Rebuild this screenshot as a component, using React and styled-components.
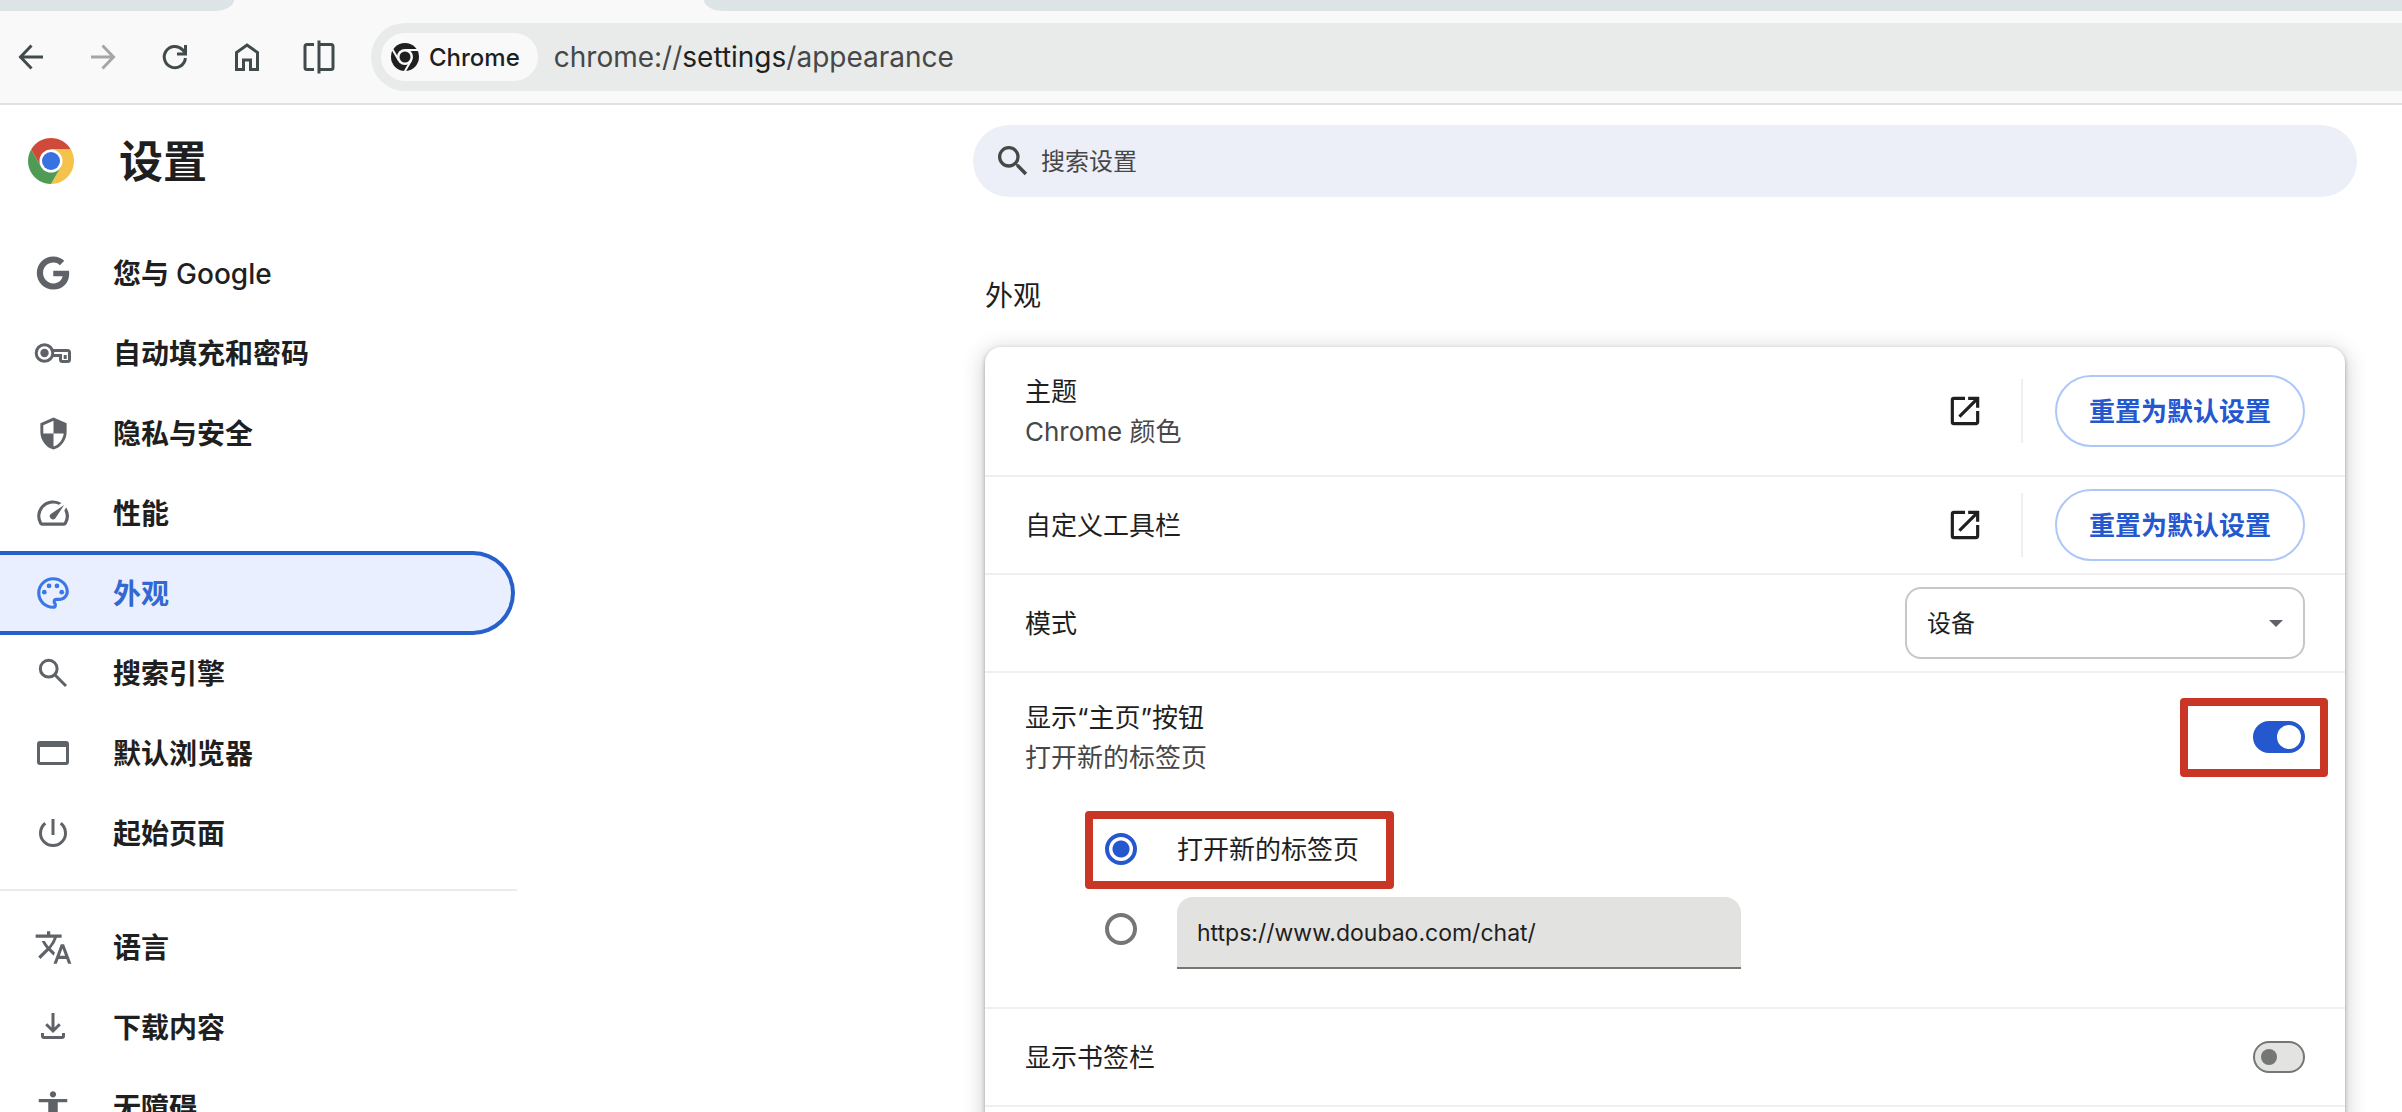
import React, { useState } from "react";
import styled, { createGlobalStyle, css } from "styled-components";
import {
  MdAccessibility,
  MdOpenInNew,
  MdOutlinePalette,
  MdSearch,
  MdSecurity,
  MdSpeed,
  MdTranslate,
} from "react-icons/md";
import { FaGoogle } from "react-icons/fa";

const color = {
  text: "#1f1f1f",
  subtle: "#474747",
  icon: "#5f6368",
  toolbarIcon: "#414b4b",
  blue: "#2557cf",
  line: "#efefef",
  mark: "#ca3625",
};

const GlobalStyle = createGlobalStyle`
  *, *::before, *::after { box-sizing: border-box; }
  body { margin: 0; background: #fff; overflow: hidden; }
  body, button, input, select {
    font-family: Inter, "Noto Sans CJK SC", sans-serif;
    color: ${color.text};
  }
`;

const Page = styled.div`
  display: flex;
  flex-direction: column;
  height: 100vh;
  overflow: hidden;
`;

/* Browser frame */

const TabStrip = styled.div`
  display: flex;
  justify-content: space-between;
  gap: 470px;
  height: 11px;
  flex: none;
  background: #f9f9f9;
`;

const TabEdge = styled.div`
  background: #dce4e6;
  ${(p) =>
    p.$side === "left"
      ? css`
          width: 234px;
          border-bottom-right-radius: 20px 11px;
        `
      : css`
          flex: 1;
          border-bottom-left-radius: 20px 11px;
        `}
`;

const Toolbar = styled.div`
  display: flex;
  align-items: center;
  flex: none;
  height: 94px;
  padding: 0 0 0 3px;
  background: #f9f9f9;
  border-bottom: 2px solid #e1e1e1;
`;

const ToolbarButtons = styled.div`
  display: flex;
  gap: 16px;
  margin-right: 24px;
`;

const ToolbarButton = styled.button`
  display: grid;
  place-items: center;
  width: 56px;
  height: 56px;
  padding: 0;
  border: 0;
  border-radius: 50%;
  background: none;
  color: ${color.toolbarIcon};
  &:disabled {
    color: #a5a7a7;
  }
`;

const AddressBar = styled.div`
  display: flex;
  align-items: center;
  flex: 1;
  gap: 16px;
  height: 68px;
  padding-left: 10px;
  border-radius: 34px 0 0 34px;
  background: #e8ebea;
`;

const SiteChip = styled.button`
  display: flex;
  align-items: center;
  gap: 10px;
  height: 48px;
  padding: 0 18px 0 10px;
  border: 0;
  border-radius: 24px;
  background: #f9f9f9;
  font-size: 24px;
  font-weight: 500;
`;

const Address = styled.div`
  font-size: 28px;
  line-height: 40px;
  color: ${color.subtle};
  b {
    font-weight: 400;
    color: ${color.text};
  }
`;

/* Settings header */

const Header = styled.header`
  display: flex;
  align-items: center;
  justify-content: space-between;
  flex: none;
  height: 112px;
  padding: 0 45px 0 28px;
`;

const Brand = styled.div`
  display: flex;
  align-items: center;
  gap: 45px;
`;

const Title = styled.h1`
  margin: 0;
  padding-top: 2px;
  font-size: 44px;
  line-height: 56px;
  font-weight: 600;
`;

const SearchBox = styled.label`
  display: flex;
  align-items: center;
  flex: 0 1 1384px;
  gap: 8px;
  height: 72px;
  padding: 0 24px 0 20px;
  border-radius: 36px;
  background: #eceff7;
  color: ${color.subtle};
  svg {
    flex: none;
  }
`;

const SearchInput = styled.input`
  flex: 1;
  min-width: 0;
  padding: 2px 0 0;
  border: 0;
  outline: 0;
  background: none;
  font-size: 24px;
  line-height: 40px;
  &::placeholder {
    color: ${color.subtle};
    opacity: 1;
  }
`;

/* Side menu */

const Body = styled.div`
  display: flex;
  justify-content: space-between;
  flex: 1;
  min-height: 0;
`;

const Sidebar = styled.nav`
  display: flex;
  flex-direction: column;
  gap: 4px;
  width: 517px;
  flex: none;
  padding-top: 18px;
  overflow: hidden;
`;

const MenuLink = styled.a`
  display: flex;
  align-items: center;
  flex: none;
  gap: 40px;
  height: 76px;
  margin-right: 6px;
  padding-left: 33px;
  border-radius: 0 38px 38px 0;
  text-decoration: none;
  color: ${color.text};
  ${(p) =>
    p.$active &&
    css`
      background: #e9effe;
      box-shadow: 0 0 0 4px #2860cb;
      color: #3367d1;
    `}
`;

const MenuIcon = styled.span`
  display: grid;
  place-items: center;
  width: 40px;
  height: 40px;
  color: ${(p) => (p.$active ? "#3b78e7" : color.icon)};
`;

const MenuLabel = styled.span`
  padding-top: 2px;
  font-size: 28px;
  line-height: 40px;
  font-weight: 600;
`;

const Latin = styled.span`
  font-weight: 500;
`;

const MenuDivider = styled.hr`
  flex: none;
  width: 100%;
  height: 2px;
  margin: 14px 0;
  border: 0;
  background: #ebebeb;
`;

/* Content */

const Main = styled.main`
  flex: 0 1 1384px;
  margin-right: 45px;
  padding: 59px 12px 0;
`;

const SectionTitle = styled.h2`
  margin: 0 0 31px;
  font-size: 28px;
  line-height: 40px;
  font-weight: 400;
`;

const Card = styled.section`
  min-height: 860px;
  border-radius: 16px;
  background: #fff;
  box-shadow:
    0 2px 4px rgba(60, 64, 67, 0.4),
    0 4px 20px 2px rgba(60, 64, 67, 0.24);
`;

const Row = styled.div`
  display: flex;
  align-items: center;
  justify-content: space-between;
  height: ${(p) => (p.$tall ? 128 : 96)}px;
  padding: 0 40px;
`;

const Group = styled.div`
  border-bottom: 2px solid ${color.line};
`;

const RowText = styled.label`
  display: flex;
  flex-direction: column;
  padding-top: 2px;
  font-size: 26px;
  line-height: 40px;
`;

const Secondary = styled.span`
  color: ${color.subtle};
`;

const Actions = styled.div`
  display: flex;
  align-items: center;
`;

const OpenLink = styled.a`
  display: grid;
  place-items: center;
  width: 72px;
  height: 72px;
  margin-right: 20px;
  color: ${color.text};
`;

const Separator = styled.span`
  width: 2px;
  height: 64px;
  margin-right: 32px;
  background: ${color.line};
`;

const ResetButton = styled.button`
  height: 72px;
  padding: 2px 32px 0;
  border: 2px solid #adc7f8;
  border-radius: 36px;
  background: #fff;
  color: ${color.blue};
  font-size: 26px;
  line-height: 40px;
  font-weight: 600;
`;

const SelectBox = styled.div`
  display: grid;
  align-items: center;
  width: 400px;
  color: ${color.icon};
  > * {
    grid-area: 1 / 1;
  }
  svg {
    justify-self: end;
    margin-right: 22px;
    pointer-events: none;
  }
`;

const Select = styled.select`
  width: 100%;
  height: 72px;
  padding: 0 20px;
  appearance: none;
  border: 2px solid #c7c7c7;
  border-radius: 16px;
  background: #fff;
  font-size: 24px;
`;

const Switch = styled.input`
  appearance: none;
  display: flex;
  align-items: center;
  width: 52px;
  height: 32px;
  margin: 0;
  padding: 0 6px;
  border: 2px solid #747775;
  border-radius: 16px;
  background: #e3e3e1;
  &::before {
    content: "";
    width: 16px;
    height: 16px;
    border-radius: 50%;
    background: #747775;
  }
  &:checked {
    justify-content: flex-end;
    padding: 0 2px;
    border-color: ${color.blue};
    background: ${color.blue};
  }
  &:checked::before {
    width: 24px;
    height: 24px;
    background: #fff;
  }
`;

const Marked = styled.div`
  position: relative;
  &::after {
    content: "";
    position: absolute;
    inset: ${(p) => p.$inset};
    border: 8px solid ${color.mark};
    border-radius: 4px;
    pointer-events: none;
  }
`;

const Choices = styled.div`
  display: flex;
  flex-direction: column;
  align-items: flex-start;
  padding: 8px 40px 38px 120px;
`;

const Choice = styled.div`
  display: flex;
  align-items: center;
  gap: 40px;
  height: 80px;
`;

const ChoiceLabel = styled.label`
  padding-top: 2px;
  font-size: 26px;
  line-height: 40px;
`;

const Radio = styled.input`
  appearance: none;
  width: 32px;
  height: 32px;
  margin: 0;
  border: 4px solid #747775;
  border-radius: 50%;
  background: #fff;
  &:checked {
    border-color: ${color.blue};
    background: radial-gradient(circle, ${color.blue} 0 8px, #fff 9px);
  }
`;

const UrlInput = styled.input`
  align-self: flex-end;
  width: 564px;
  height: 72px;
  padding: 2px 20px 0;
  border: 0;
  border-bottom: 2px solid #747775;
  border-radius: 16px 16px 0 0;
  outline: 0;
  background: #e2e2e0;
  font-size: 23px;
`;

/* Drawings */

const Stroke = ({ size = 40, width = 3, children }) => (
  <svg
    width={size}
    height={size}
    viewBox={`0 0 ${size} ${size}`}
    fill="none"
    stroke="currentColor"
    strokeWidth={width}
    aria-hidden="true"
  >
    {children}
  </svg>
);

const BackIcon = () => (
  <Stroke>
    <path d="M32 20H10M20.5 8.5 9.5 20l11 11.5" />
  </Stroke>
);
const ForwardIcon = () => (
  <Stroke>
    <path d="M8 20h22M19.5 8.5l11 11.5-11 11.5" />
  </Stroke>
);
const ReloadIcon = () => (
  <Stroke>
    <path d="M30.4 21A10.6 10.6 0 1 1 27.4 12.6L30 15.6" />
    <path d="M30.5 8v9H22" />
  </Stroke>
);
const HomeIcon = () => (
  <Stroke>
    <path d="M9.5 32.5v-17L20 8l10.5 7.5v17h-7V23h-7v9.5z" />
  </Stroke>
);
const SplitIcon = () => (
  <Stroke>
    <path d="M15 7.5H8a2 2 0 0 0-2 2v21a2 2 0 0 0 2 2h7M20 7.5h12a2 2 0 0 1 2 2v21a2 2 0 0 1-2 2H20" />
    <path d="M20 3.5v33" />
  </Stroke>
);

const ChromeMono = () => (
  <svg width="28" height="28" viewBox="0 0 28 28" aria-hidden="true">
    <circle cx="14" cy="14" r="14" fill="#1f1f1f" />
    <circle cx="14" cy="14" r="8" fill="#f9f9f9" />
    <g stroke="#f9f9f9" strokeWidth="2">
      <path d="M14 7h14" />
      <path d="M14 7h14" transform="rotate(120 14 14)" />
      <path d="M14 7h14" transform="rotate(240 14 14)" />
    </g>
    <circle cx="14" cy="14" r="5.5" fill="#1f1f1f" />
  </svg>
);

const ChromeLogo = () => (
  <svg width="46" height="46" viewBox="0 0 46 46" aria-hidden="true">
    <path fill="#d04a3a" d="M3.1 11.5A23 23 0 0 1 42.9 11.5H23V23L13.04 28.75z" />
    <path fill="#f3c34b" d="M42.9 11.5A23 23 0 0 1 23 46L32.96 28.75 23 23V11.5z" />
    <path fill="#4f9b55" d="M23 46A23 23 0 0 1 3.1 11.5L13.04 28.75 23 23 32.96 28.75z" />
    <circle cx="23" cy="23" r="11.5" fill="#fff" />
    <circle cx="23" cy="23" r="9" fill="#3872e0" />
  </svg>
);

const KeyIcon = () => (
  <Stroke>
    <circle cx="11.5" cy="20" r="8.3" />
    <circle cx="11.5" cy="20" r="4.2" fill="currentColor" stroke="none" />
    <path d="M19.5 17.5H34.5a2 2 0 0 1 2 2v7a2 2 0 0 1-2 2H29.5a2 2 0 0 1-2-2V22.5H19.5M32.2 22v4" />
  </Stroke>
);
const FindIcon = () => (
  <Stroke>
    <circle cx="15.7" cy="15.7" r="8.4" />
    <path d="M21.8 21.8 33 33" />
  </Stroke>
);
const WindowIcon = () => (
  <Stroke>
    <rect x="5.5" y="9.5" width="29" height="21" rx="1.5" />
    <path d="M5 11.500h30" strokeWidth="5" />
  </Stroke>
);
const PowerIcon = () => (
  <Stroke>
    <path d="M20 6v16M12.3 10.2a12.5 12.5 0 1 0 15.4 0" />
  </Stroke>
);
const DownloadIcon = () => (
  <Stroke>
    <path d="M20 6v17M13.2 17.2l6.8 6.8 6.8-6.8M9.5 26v3a1.500 1.500 0 0 0 1.500 1.500h18a1.500 1.500 0 0 0 1.500-1.500v-3" />
  </Stroke>
);
const Caret = () => (
  <svg width="14" height="7" viewBox="0 0 14 7" aria-hidden="true">
    <path d="M0 0h14L7 7z" fill="currentColor" />
  </svg>
);

const primaryMenu = [
  { label: "您与 ", latin: "Google", icon: <FaGoogle size={34} /> },
  { label: "自动填充和密码", icon: <KeyIcon /> },
  { label: "隐私与安全", icon: <MdSecurity size={35} /> },
  { label: "性能", icon: <MdSpeed size={38} /> },
  { label: "外观", icon: <MdOutlinePalette size={38} />, active: true },
  { label: "搜索引擎", icon: <FindIcon /> },
  { label: "默认浏览器", icon: <WindowIcon /> },
  { label: "起始页面", icon: <PowerIcon /> },
];

const advancedMenu = [
  { label: "语言", icon: <MdTranslate size={39} /> },
  { label: "下载内容", icon: <DownloadIcon /> },
  { label: "无障碍", icon: <MdAccessibility size={38} /> },
];

const MenuItem = ({ label, latin, icon, active }) => (
  <MenuLink href="#" $active={active} aria-current={active ? "page" : undefined}>
    <MenuIcon $active={active}>{icon}</MenuIcon>
    <MenuLabel>
      {label}
      {latin && <Latin>{latin}</Latin>}
    </MenuLabel>
  </MenuLink>
);

const ResetActions = ({ name }) => (
  <Actions>
    <OpenLink href="#" aria-label={name}>
      <MdOpenInNew size={38} />
    </OpenLink>
    <Separator />
    <ResetButton type="button">重置为默认设置</ResetButton>
  </Actions>
);

export default function App() {
  const [homePage, setHomePage] = useState("newtab");
  const [showHome, setShowHome] = useState(true);
  const [showBookmarks, setShowBookmarks] = useState(false);

  return (
    <Page>
      <GlobalStyle />
      <TabStrip>
        <TabEdge $side="left" />
        <TabEdge $side="right" />
      </TabStrip>
      <Toolbar>
        <ToolbarButtons>
          <ToolbarButton aria-label="后退"><BackIcon /></ToolbarButton>
          <ToolbarButton aria-label="前进" disabled><ForwardIcon /></ToolbarButton>
          <ToolbarButton aria-label="重新加载"><ReloadIcon /></ToolbarButton>
          <ToolbarButton aria-label="主页"><HomeIcon /></ToolbarButton>
          <ToolbarButton aria-label="分屏"><SplitIcon /></ToolbarButton>
        </ToolbarButtons>
        <AddressBar>
          <SiteChip type="button">
            <ChromeMono />
            Chrome
          </SiteChip>
          <Address>
            chrome://<b>settings</b>/appearance
          </Address>
        </AddressBar>
      </Toolbar>

      <Header>
        <Brand>
          <ChromeLogo />
          <Title>设置</Title>
        </Brand>
        <SearchBox>
          <MdSearch size={40} />
          <SearchInput type="search" placeholder="搜索设置" aria-label="搜索设置" />
        </SearchBox>
      </Header>

      <Body>
        <Sidebar>
          {primaryMenu.map((item) => (
            <MenuItem key={item.label} {...item} />
          ))}
          <MenuDivider />
          {advancedMenu.map((item) => (
            <MenuItem key={item.label} {...item} />
          ))}
        </Sidebar>

        <Main>
          <SectionTitle>外观</SectionTitle>
          <Card>
            <Group>
              <Row $tall>
                <RowText as="div">
                  主题
                  <Secondary>Chrome 颜色</Secondary>
                </RowText>
                <ResetActions name="主题" />
              </Row>
            </Group>
            <Group>
              <Row>
                <RowText as="div">自定义工具栏</RowText>
                <ResetActions name="自定义工具栏" />
              </Row>
            </Group>
            <Group>
              <Row>
                <RowText htmlFor="mode">模式</RowText>
                <SelectBox>
                  <Select id="mode" defaultValue="device">
                    <option value="device">设备</option>
                  </Select>
                  <Caret />
                </SelectBox>
              </Row>
            </Group>
            <Group>
              <Row $tall>
                <RowText htmlFor="show-home">
                  显示“主页”按钮
                  <Secondary>打开新的标签页</Secondary>
                </RowText>
                <Marked $inset="-23px -23px -24px -73px">
                  <Switch
                    id="show-home"
                    type="checkbox"
                    role="switch"
                    checked={showHome}
                    onChange={(e) => setShowHome(e.target.checked)}
                  />
                </Marked>
              </Row>
              <Choices>
                <Marked $inset="2px -35px 0 -20px">
                  <Choice>
                    <Radio
                      id="home-newtab"
                      type="radio"
                      name="home"
                      checked={homePage === "newtab"}
                      onChange={() => setHomePage("newtab")}
                    />
                    <ChoiceLabel htmlFor="home-newtab">打开新的标签页</ChoiceLabel>
                  </Choice>
                </Marked>
                <Choice>
                  <Radio
                    type="radio"
                    name="home"
                    aria-label="自定义网址"
                    checked={homePage === "url"}
                    onChange={() => setHomePage("url")}
                  />
                  <UrlInput
                    type="text"
                    aria-label="自定义网址"
                    defaultValue="https://www.doubao.com/chat/"
                  />
                </Choice>
              </Choices>
            </Group>
            <Group>
              <Row>
                <RowText htmlFor="show-bookmarks">显示书签栏</RowText>
                <Switch
                  id="show-bookmarks"
                  type="checkbox"
                  role="switch"
                  checked={showBookmarks}
                  onChange={(e) => setShowBookmarks(e.target.checked)}
                />
              </Row>
            </Group>
          </Card>
        </Main>
      </Body>
    </Page>
  );
}
